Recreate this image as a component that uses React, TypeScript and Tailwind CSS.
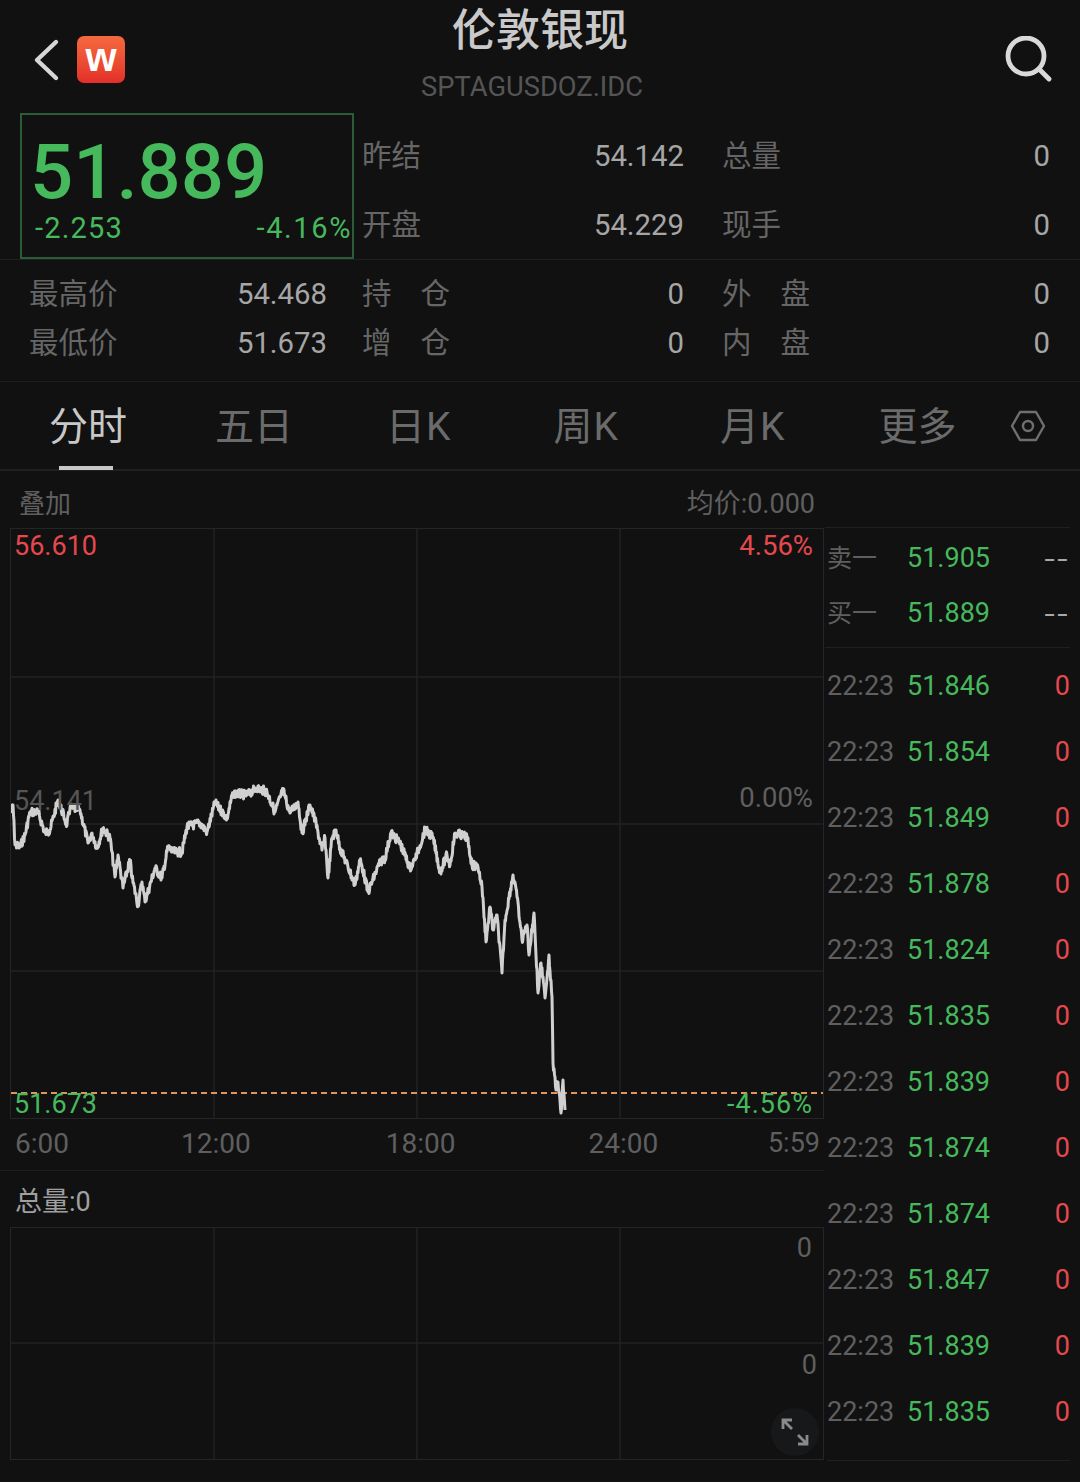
const FONT = "font-['Roboto','Noto_Sans_CJK_SC',sans-serif]";

const trace: [number, number][] = [
  [11, 813], [13, 805], [15, 845], [20, 847], [25, 835], [30, 812], [38, 812], [45, 833], [50, 830], [58, 800],
  [67, 825], [70, 808], [80, 810], [88, 843], [92, 833], [97, 848], [103, 828], [110, 838], [115, 877], [118, 855],
  [123, 888], [130, 860], [132, 878], [138, 905], [142, 882], [145, 902], [155, 868], [162, 878], [168, 847], [173, 852],
  [182, 852], [187, 827], [200, 823], [207, 832], [215, 803], [227, 818], [233, 793], [247, 795], [257, 788], [267, 792],
  [275, 812], [283, 790], [290, 813], [298, 802], [302, 833], [310, 805], [315, 820], [322, 850], [325, 838], [328, 878],
  [332, 838], [336, 830], [340, 848], [348, 867], [355, 885], [360, 860], [363, 870], [368, 892], [380, 862], [385, 858],
  [391, 833], [400, 843], [410, 868], [415, 860], [425, 830], [433, 837], [440, 872], [447, 855], [450, 865], [455, 833],
  [467, 837], [472, 865], [478, 867], [482, 887], [486, 942], [490, 907], [493, 930], [497, 915], [502, 973], [505, 920],
  [513, 875], [517, 897], [522, 940], [527, 925], [529, 955], [534, 913], [538, 993], [541, 963], [545, 998], [549, 955],
  [552, 997], [553, 1063], [556, 1090], [558, 1082], [561, 1113], [563, 1080], [565, 1110],
];

// fill in the traced line with small noise so it reads like tick data
function tickLine() {
  const out: string[] = [];
  let seed = 7;
  trace.forEach(([x, y], i) => {
    const next = trace[i + 1];
    if (!next) {
      out.push(`${x - 11},${y - 529}`);
      return;
    }
    const steps = Math.max(1, Math.round((next[0] - x) * 2));
    for (let s = 0; s < steps; s++) {
      seed = (seed * 9301 + 49297) % 233280;
      const noise = s === 0 ? 0 : (seed / 233280 - 0.5) * 9;
      const px = x + ((next[0] - x) * s) / steps;
      const py = y + ((next[1] - y) * s) / steps + noise;
      out.push(`${(px - 11).toFixed(1)},${(py - 529).toFixed(1)}`);
    }
  });
  return out.join(" ");
}

const ticks = ["51.846", "51.854", "51.849", "51.878", "51.824", "51.835", "51.839", "51.874", "51.874", "51.847", "51.839", "51.835"];

const Stat = ({ label, value, wide }: { label: string; value: string; wide?: boolean }) => (
  <div className="flex items-center justify-between text-[29.5px] leading-none">
    <span className={`-ml-[1px] text-[#666666] ${wide ? "tracking-[29px]" : ""}`}>{label}</span>
    <span className="text-[29.3px] text-[#a6a6a6]">{value}</span>
  </div>
);

const App = () => {
  return (
    <div className={`${FONT} w-[1080px] h-[1482px] bg-[#111112] overflow-hidden`}>
      {/* header */}
      <div className="relative h-[113px]">
        <div className="absolute left-[33px] top-[36px] flex items-center">
          <svg width="28" height="46" viewBox="0 0 28 46" fill="none" stroke="#d6d6d6" strokeWidth="4.4" strokeLinecap="round" strokeLinejoin="round">
            <path d="M23 5L4 23l19 18" />
          </svg>
          <div className="w-[48px] h-[47px] ml-[16px] rounded-[7px] bg-gradient-to-b from-[#f5693f] to-[#e32e28] flex items-center justify-center">
            <span className="text-white text-[40px] font-bold leading-none -mt-[5px] font-['Liberation_Sans',sans-serif]">w</span>
          </div>
        </div>
        <div className="flex flex-col items-center">
          <h1 className="text-[44px] leading-[62px] font-medium text-[#c9c9c9]">伦敦银现</h1>
          <div className="text-[27.3px] leading-[50px] -ml-[16px] text-[#555555]">SPTAGUSDOZ.IDC</div>
        </div>
        <svg className="absolute left-[1004px] top-[36px]" width="48" height="46" viewBox="0 0 48 46" fill="none" stroke="#d9d9d9" strokeWidth="4.8" strokeLinecap="round">
          <circle cx="22" cy="20" r="18" />
          <path d="M35 33l10 10" />
        </svg>
      </div>

      {/* quote */}
      <div className="flex h-[147px] border-b border-[#1f2022] pl-[20px] pr-[30px]">
        <div className="w-[334px] h-[146px] border-2 border-[#2c5c37] flex flex-col text-[#46b95c]">
          <div className="text-[76px] font-medium leading-[70px] pl-[8px] pt-[22px]">51.889</div>
          <div className="flex justify-between text-[29px] leading-none pl-[13px] pr-[0px] pt-[7px]">
            <span className="tracking-[1.2px]">-2.253</span>
            <span className="tracking-[1.6px]">-4.16%</span>
          </div>
        </div>
        <div className="ml-[9px] w-[321px] flex flex-col gap-[39px] pt-[29px]">
          <Stat label="昨结" value="54.142" />
          <Stat label="开盘" value="54.229" />
        </div>
        <div className="ml-[39px] flex-1 flex flex-col gap-[39px] pt-[29px]">
          <Stat label="总量" value="0" />
          <Stat label="现手" value="0" />
        </div>
      </div>

      <div className="flex h-[122px] border-b border-[#1f2022] pl-[30px] pr-[30px]">
        <div className="w-[297px] flex flex-col gap-[19px] pt-[20px]">
          <Stat label="最高价" value="54.468" />
          <Stat label="最低价" value="51.673" />
        </div>
        <div className="ml-[36px] w-[321px] flex flex-col gap-[19px] pt-[20px]">
          <Stat label="持仓" value="0" wide />
          <Stat label="增仓" value="0" wide />
        </div>
        <div className="ml-[39px] flex-1 flex flex-col gap-[19px] pt-[20px]">
          <Stat label="外盘" value="0" wide />
          <Stat label="内盘" value="0" wide />
        </div>
      </div>

      {/* tabs */}
      <div className="relative h-[89px] border-b-2 border-[#1f2022] text-[39px] leading-none text-[#6b6b6b]">
        <div className="flex items-center h-[87px] pt-[3px]">
          <span className="ml-[49px] text-[#c8c8c8]">分时</span>
          <span className="ml-[88px]">五日</span>
          <span className="ml-[93px] tracking-[1px]">日K</span>
          <span className="ml-[102px] tracking-[1px]">周K</span>
          <span className="ml-[101px] tracking-[1px]">月K</span>
          <span className="ml-[93px]">更多</span>
        </div>
        <div className="absolute left-[59px] top-[84px] w-[54px] h-[4px] bg-[#c8c8c8]" />
        <svg className="absolute left-[1010px] top-[27px]" width="36" height="34" viewBox="0 0 36 34" fill="none" stroke="#6f6f6f" strokeWidth="2.4">
          <path d="M10 3h16l8 14-8 14H10L2 17z" strokeLinejoin="round" />
          <circle cx="18" cy="17" r="5" />
        </svg>
      </div>

      {/* overlay + average */}
      <div className="flex items-center justify-between h-[57px] w-[815px] pl-[19px] pt-[9px] text-[27px] text-[#5f5f5f]">
        <span className="text-[26px]">叠加</span>
        <span>均价:0.000</span>
      </div>

      <div className="flex">
        {/* charts */}
        <div className="w-[824px]">
          <div className="relative ml-[10px] w-[814px] h-[591px] border border-[#242527] text-[27px] leading-none">
            <svg className="absolute inset-0" width="812" height="589" fill="none">
              <path d="M0 148H812M0 295H812M0 442H812M203 0V589M406 0V589M609 0V589" stroke="#212225" strokeWidth="1.5" />
              <path d="M0 564H812" stroke="#e2935a" strokeWidth="2.2" strokeDasharray="6 4" />
              <polyline points={tickLine()} stroke="#d0d0d0" strokeWidth="3" strokeLinejoin="round" />
            </svg>
            <span className="absolute left-[3px] top-[4px] text-[#e5484d]">56.610</span>
            <span className="absolute right-[10px] top-[3px] text-[27.5px] text-[#e5484d]">4.56%</span>
            <span className="absolute left-[3px] top-[259px] text-[#555555]">54.141</span>
            <span className="absolute right-[10px] top-[255px] text-[27.5px] text-[#5f5f5f]">0.00%</span>
            <span className="absolute left-[3px] top-[562px] text-[#46b95c]">51.673</span>
            <span className="absolute right-[10px] top-[562px] tracking-[1px] text-[#46b95c]">-4.56%</span>
          </div>
          <div className="flex h-[52px] pl-[15px] pr-[4px] pt-[11px] border-b border-[#1f2022] text-[28px] leading-none text-[#5f5f5f]">
            <span>6:00</span>
            <span className="ml-[112px]">12:00</span>
            <span className="ml-[135px]">18:00</span>
            <span className="ml-[133px]">24:00</span>
            <span className="ml-auto text-[27px]">5:59</span>
          </div>
          <div className="h-[56px] pl-[15px] pt-[18px] text-[27px] leading-none text-[#a0a0a0]">总量:0</div>
          <div className="relative ml-[10px] w-[814px] h-[233px] border border-[#242527] text-[27px] leading-none text-[#5f5f5f]">
            <svg className="absolute inset-0" width="812" height="231" fill="none">
              <path d="M0 115H812M203 0V231M406 0V231M609 0V231" stroke="#212225" strokeWidth="1.5" />
            </svg>
            <span className="absolute right-[11px] top-[7px]">0</span>
            <span className="absolute right-[6px] top-[124px]">0</span>
            <div className="absolute left-[760px] top-[180px] w-[48px] h-[48px] rounded-full bg-[#171819] flex items-center justify-center">
              <svg width="28" height="28" viewBox="0 0 28 28" fill="none" stroke="#8a8a8a" strokeWidth="2.8">
                <path d="M2 2l9 9M2 11V2h9M26 26l-9-9M26 17v9h-9" />
              </svg>
            </div>
          </div>
        </div>

        {/* tick list */}
        <div className="flex-1 text-[27px] leading-none pr-[11px] -mt-[1px]">
          <div className="h-[121px] border-y border-[#1f2022] ml-[1px] flex flex-col gap-[24px] pt-[15px]">
            {[
              ["卖一", "51.905"],
              ["买一", "51.889"],
            ].map(([label, price]) => (
              <div key={label} className="flex items-center h-[31px] pl-[2px]">
                <span className="w-[80px] text-[25px] text-[#5f5f5f]">{label}</span>
                <span className="text-[#46b95c]">{price}</span>
                <span className="ml-auto text-[38px] font-light tracking-[2px] text-[#a9a9a9]">--</span>
              </div>
            ))}
          </div>
          <div className="ml-[3px] pt-[22px] flex flex-col gap-[34px] pb-[32px] border-b border-[#1f2022] w-[243px]">
            {ticks.map((price, i) => (
              <div key={i} className="flex items-center h-[32px]">
                <span className="w-[80px] text-[#5f5f5f]">22:23</span>
                <span className="text-[#46b95c]">{price}</span>
                <span className="ml-auto text-[#e5484d]">0</span>
              </div>
            ))}
          </div>
        </div>
      </div>
    </div>
  );
};

export default App;
